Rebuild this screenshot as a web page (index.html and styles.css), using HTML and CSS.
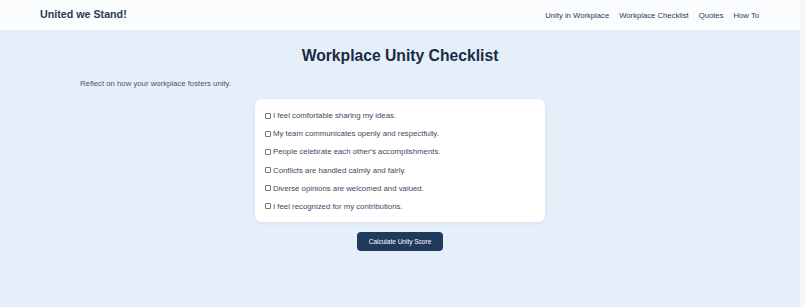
FILE: index.html
```html
<!DOCTYPE html>
<html lang="en">
<head>
<meta charset="utf-8">
<title>United we Stand!</title>
<link rel="stylesheet" href="styles.css">
</head>
<body>
<div class="page">
  <header class="site-header">
    <div class="brand">United we Stand!</div>
    <nav class="nav">
      <a href="#unity">Unity in Workplace</a>
      <a href="#checklist">Workplace Checklist</a>
      <a href="#quotes">Quotes</a>
      <a href="#howto">How To</a>
    </nav>
  </header>
  <main class="main">
    <section class="checklist-section" id="checklist">
      <h1 class="title">Workplace Unity Checklist</h1>
      <p class="intro">Reflect on how your workplace fosters unity.</p>
      <div class="card">
        <label class="item"><input type="checkbox"> I feel comfortable sharing my ideas.</label>
        <label class="item"><input type="checkbox"> My team communicates openly and respectfully.</label>
        <label class="item"><input type="checkbox"> People celebrate each other's accomplishments.</label>
        <label class="item"><input type="checkbox"> Conflicts are handled calmly and fairly.</label>
        <label class="item"><input type="checkbox"> Diverse opinions are welcomed and valued.</label>
        <label class="item"><input type="checkbox"> I feel recognized for my contributions.</label>
      </div>
      <div class="actions">
        <button class="btn" type="button">Calculate Unity Score</button>
      </div>
    </section>
  </main>
</div>
</body>
</html>
```
FILE: styles.css
```css
body {
  margin: 0;
  font-family: "Liberation Sans", Arial, sans-serif;
  background: #f6f7f8;
  color: #3f4b5e;
}
.page {
  width: 800px;
  min-height: 307px;
  background: #e5eff9;
}
.site-header {
  height: 30px;
  background: #fbfcfe;
  display: flex;
  align-items: center;
  justify-content: space-between;
  padding: 0 41px 0 40px;
}
.brand {
  font-size: 10.7px;
  font-weight: bold;
  color: #2c3a52;
  margin-top: -2px;
}
.nav {
  display: flex;
  gap: 10px;
}
.nav a {
  font-size: 7.7px;
  color: #2c3a52;
  text-decoration: none;
}
.main {
  padding: 17px 40px 40px;
}
.title {
  margin: 0;
  text-align: center;
  font-size: 15.7px;
  font-weight: bold;
  color: #1b2a45;
}
.intro {
  margin: 14px 0 11px 40px;
  font-size: 7.75px;
  color: #4a5568;
}
.card {
  width: 270px;
  margin: 0 auto;
  background: #ffffff;
  border-radius: 7px;
  box-shadow: 0 1px 4px rgba(30, 50, 80, 0.08);
  padding: 12px 10px 10px;
  display: flex;
  flex-direction: column;
  gap: 8.2px;
}
.item {
  display: flex;
  align-items: center;
  font-size: 7.8px;
  color: #3c4a63;
  line-height: 10px;
}
.item input {
  appearance: none;
  -webkit-appearance: none;
  box-sizing: border-box;
  width: 6px;
  height: 6px;
  margin: 0 2px 1px 0;
  border: 1px solid #767676;
  border-radius: 1px;
  background: #fff;
}
.actions {
  display: flex;
  justify-content: center;
  margin-top: 10px;
}
.btn {
  width: 86px;
  height: 19px;
  border: 0;
  border-radius: 4px;
  background: #1f3a5c;
  color: #ffffff;
  font-family: "Liberation Sans", Arial, sans-serif;
  font-size: 6.5px;
  padding: 0;
}
```
